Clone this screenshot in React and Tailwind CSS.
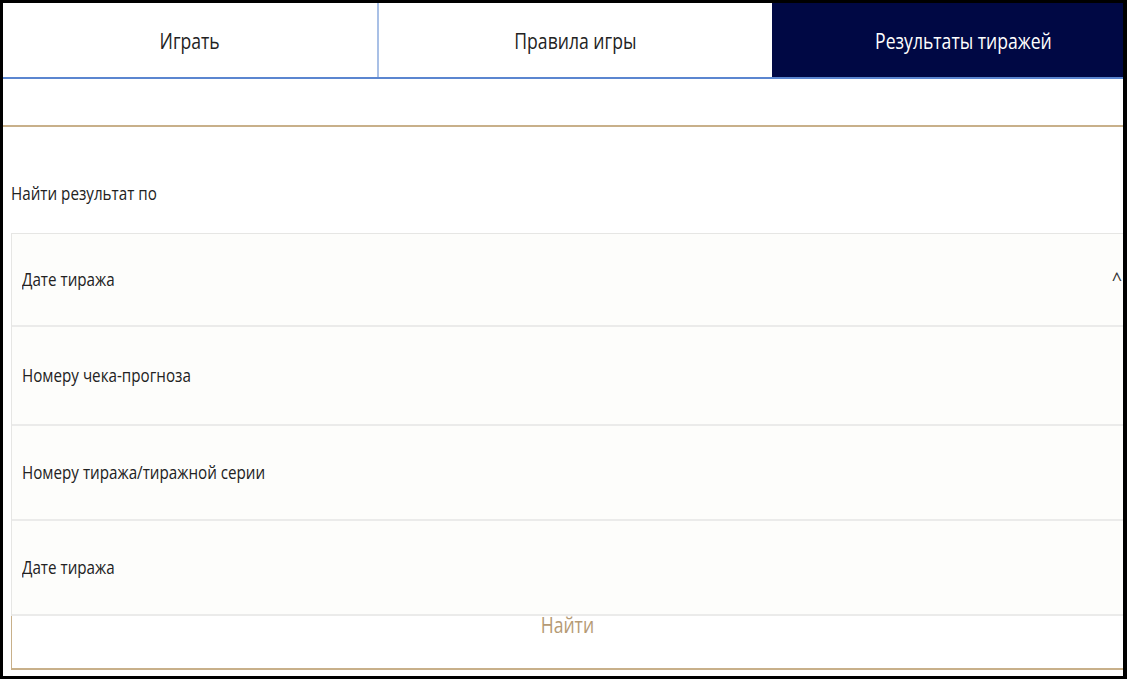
export default function App() {
  const f = { fontFamily: '"Open Sans", "Noto Sans", sans-serif' };
  const T = ({ children, className = "" }) => (
    <span className={"inline-block scale-x-[0.8] origin-left whitespace-nowrap " + className}>{children}</span>
  );
  const Tc = ({ children, className = "" }) => (
    <span className={"inline-block scale-x-[0.8] whitespace-nowrap " + className}>{children}</span>
  );
  const rows = ["Номеру чека-прогноза", "Номеру тиража/тиражной серии", "Дате тиража"];
  return (
    <div className="w-[1127px] h-[679px] bg-black pt-[3px] pl-[3px] pr-[4px] pb-[3px]" style={f}>
      <div className="w-full h-full bg-white flex flex-col overflow-hidden">
        <div className="flex h-[76px] border-b-2 border-[#5b86d0]">
          <div className="w-[376px] flex items-center justify-center border-r-2 border-[#a9c0e6] text-[22px] text-[#222]"><Tc>Играть</Tc></div>
          <div className="w-[393px] flex items-center justify-center text-[22px] text-[#222]"><Tc>Правила игры</Tc></div>
          <div className="flex-1 flex items-center justify-center bg-[#000844] text-[22px] text-white"><Tc className="translate-x-[16px]">Результаты тиражей</Tc></div>
        </div>
        <div className="h-[48px] border-b-2 border-[#c8b08a]"></div>
        <div className="pl-[8px] pt-[52px] h-[106px] text-[19px] text-[#222]"><T>Найти результат по</T></div>
        <div className="ml-[8px] flex flex-col border-l border-t border-[#e6e6e4]">
          <div className="h-[93px] bg-[#fdfdfb] flex items-center justify-between pl-[10px] border-b-2 border-[#ebebea] text-[19px] text-[#222]">
            <T>Дате тиража</T>
            <span className="text-[18px] text-[#333] pr-[1px]">^</span>
          </div>
          {rows.map((r, i) => (
            <div key={i} className={"bg-[#fdfdfb] flex items-center pl-[10px] border-b-2 border-[#ebebea] text-[19px] text-[#222] " + (i === 0 ? "h-[99px]" : "h-[95px]")}>
              <T>{r}</T>
            </div>
          ))}
          <div className="h-[54px] border-b-2 border-l border-[#c8b08a] -ml-px flex justify-center text-[22px] text-[#b59a74]">
            <Tc className="-mt-[8px]">Найти</Tc>
          </div>
        </div>
      </div>
    </div>
  );
}
